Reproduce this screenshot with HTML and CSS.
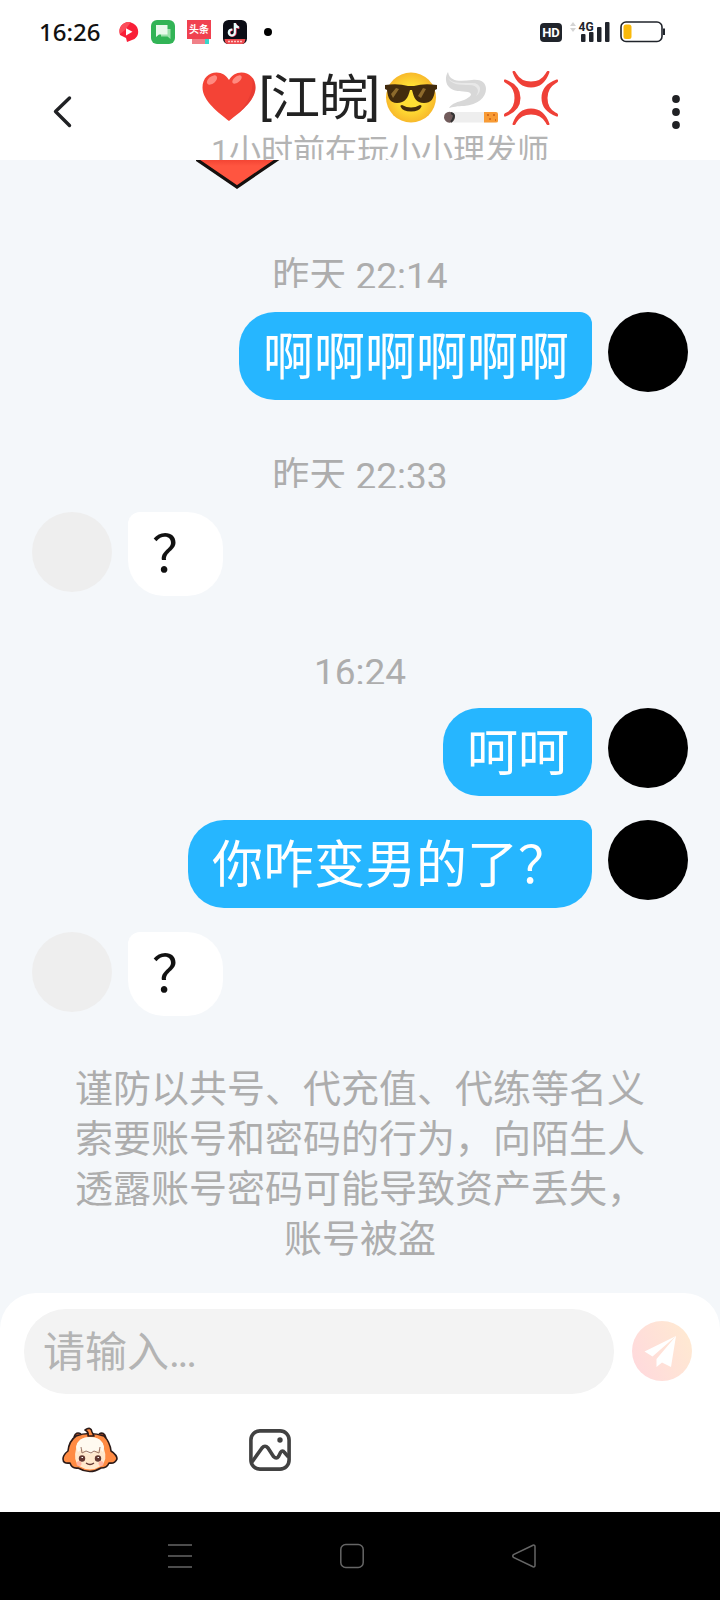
FILE: index.html
```html
<!DOCTYPE html>
<html lang="zh-CN">
<head>
<meta charset="utf-8">
<title>聊天</title>
<link rel="stylesheet" href="styles.css">
</head>
<body>
<div class="phone">
  <div class="status">
    <span class="clock">16:26</span>
    <div class="apps">
      <svg width="20" height="20" viewBox="0 0 20 20"><path d="M4 2C8-1 15 0 18 5c3 6 0 12-5 13l-5 2-1-4-6-3Q-1 6 4 2z" fill="#f91f38"/><path d="M4 2Q8-1 12 0L6 8l-5 4Q-1 6 4 2z" fill="#fb4d5a"/><path d="M7 6.200v7.200l6.500-3.600z" fill="#fff"/></svg>
      <svg width="24" height="24" viewBox="0 0 24 24"><rect width="24" height="24" rx="6" fill="#32b456"/><path d="M10 9h9.500v10l-3-2.500H10z" fill="#9be0ab"/><path d="M5 5h11.500v9.500H8L5 17z" fill="#e9f9ec"/></svg>
      <div class="news"><span class="news-name">头条</span><span class="news-strip"></span></div>
      <svg width="24" height="24" viewBox="0 0 24 24"><rect width="24" height="24" rx="5.500" fill="#0c0d16"/><path d="M1.500 19h21l-1 3.500q-1 1.500-3 1.500H5q-2 0-3-2z" fill="#ee4b50"/><path d="M5 21.500h14" stroke="#ffc9c5" stroke-width="1.500" stroke-dasharray="2 1"/><path d="M12.500 3.500v9.300a3 3 0 1 1-2.700-3M12.500 4c.5 2.400 2 3.600 4 3.800" fill="none" stroke="#ff4c6b" stroke-width="2.300"/><path d="M11.800 3v9.500a3 3 0 1 1-2.700-3M11.800 3.500c.5 2.400 2 3.600 4 3.800" fill="none" stroke="#e6ffff" stroke-width="2.200"/></svg>
      <i class="dot"></i>
    </div>
    <div class="signals">
      <span class="hd">HD</span>
      <svg width="40" height="24" viewBox="0 0 40 24"><path d="M0 6l3-4 3 4zM0 8l3 4 3-4z" fill="#d4d4d4"/><text class="network" x="8.500" y="10.500">4G</text><g fill="#20242b"><rect x="11" y="14" width="4.500" height="8" rx="1"/><rect x="19" y="12" width="4.500" height="10" rx="1"/><rect x="27" y="7" width="4.500" height="15" rx="1"/><rect x="35" y="2" width="4.500" height="20" rx="1"/></g></svg>
      <svg width="46" height="22" viewBox="0 0 46 22"><rect x="1" y="1" width="41" height="19.500" rx="5" fill="#fff" stroke="#20242b" stroke-width="1.600"/><rect x="3.500" y="3.500" width="8" height="14.500" rx="2.500" fill="#f9b90b"/><path d="M44 7.500v6.500" stroke="#20242b" stroke-width="2"/></svg>
    </div>
  </div>

  <header class="header">
    <svg class="back" width="24" height="36" viewBox="0 0 24 36"><path d="M20.500 4L6.500 17.500 20.500 31.500" fill="none" stroke="#202124" stroke-width="3.400" stroke-linecap="round" stroke-linejoin="round"/></svg>
    <div class="heading">
      <h1 class="title">
        <svg width="54" height="54" viewBox="0 0 54 54"><path d="M27 50C17 42 .5 30 .5 16.500.5 7 7 1.500 14.500 1.500 20 1.500 24.500 4.500 27 9c2.500-4.500 7-7.500 12.500-7.500C47 1.500 53.500 7 53.500 16.500 53.500 30 37 42 27 50z" fill="#f44336"/><path d="M27 50C37 42 53.500 30 53.500 16.500q0-6-3-10Q53 30 27 50z" fill="#d63230" opacity=".4"/><ellipse cx="10" cy="9" rx="6" ry="3.500" transform="rotate(-40 10 9)" fill="#ff8a80"/><ellipse cx="35" cy="8.500" rx="5.500" ry="3" transform="rotate(-38 35 8.500)" fill="#ff8a80"/></svg>
        <span class="name">[江皖]</span>
        <svg width="54" height="54" viewBox="0 0 54 54"><defs><radialGradient id="face"><stop offset=".5" stop-color="#ffdf34"/><stop offset="1" stop-color="#f8b92b"/></radialGradient></defs><circle cx="27" cy="26.500" r="25" fill="url(#face)"/><path d="M1 14q13-2 23 1h6q10-3 23-1v4l-2 1c-1 9-4 13-11 13-8 0-10-5-12-13h-2c-2 8-5 13-13 13-7 0-9-5-10-13l-2-1z" fill="#422b0d"/><path d="M7 23l5-6 3 1-6 9zM34 25l5-8 3 1-5 9z" fill="#8d6a2c"/><path d="M18 34q9 5 18 0 2 0 1.500 1.500-2 5-10.500 5t-10.500-5Q16 34 18 34z" fill="#422b0d"/></svg>
        <svg width="54" height="54" viewBox="0 0 54 54"><path d="M4 1C1 5 1 13 6 17c5 4 12 3 18 4 6 2 2 5-4 8-6 2-12 3-15 8 3-1 9-2 15-2 14-1 22-9 22-17 0-7-6-10-14-9C18 10 6 12 4 1z" fill="#d8d8d8"/><path d="M3 5c3 9 13 9 22 9 9 0 11 6 7 11 7-5 5-14-5-13C17 12 6 13 3 5z" fill="#e8e8e8"/><rect x="1" y="41" width="52" height="10.500" rx="4" fill="#eee"/><path d="M40 41h12q2 0 2 2v7q0 1.500-2 1.500H40z" fill="#f89b35"/><path d="M43 44h2m4 0h2m-6 4h2m4 1h1" stroke="#d66c1c" stroke-width="2"/><circle cx="5.500" cy="46.200" r="5.500" fill="#715b5b"/><path d="M7 42q3 1 3 3-1 4-3 6" stroke="#333" stroke-width="2" fill="none"/></svg>
        <svg width="54" height="54" viewBox="0 0 54 54"><g fill="#ef4037"><path id="vein" d="M8.600 1.500q-.2-2.500 2-1.500 1 .5 1.800 2.500Q17 10.500 27 10.500T41.600 2.500Q42.400.5 43.400 0q2.200-1 2 1.500Q40 16.500 27 16.500T8.600 1.500z"/><use href="#vein" transform="rotate(90 27 27)"/><use href="#vein" transform="rotate(180 27 27)"/><use href="#vein" transform="rotate(270 27 27)"/></g></svg>
      </h1>
      <p class="activity">1小时前在玩小小理发师</p>
    </div>
    <svg class="more" width="10" height="36" viewBox="0 0 10 36"><g fill="#202124"><circle cx="5" cy="5" r="3.900"/><circle cx="5" cy="18" r="3.900"/><circle cx="5" cy="31" r="3.900"/></g></svg>
  </header>

  <main class="chat">
    <svg class="sticker" width="84" height="32" viewBox="0 0 84 32"><defs><linearGradient id="st" x2="0" y2="1"><stop stop-color="#ee3d2d"/><stop offset=".3" stop-color="#ff5540"/></linearGradient></defs><path d="M-3-3L41 27 85-3z" fill="url(#st)" stroke="#15100e" stroke-width="3.200"/></svg>
    <time class="time">昨天 22:14</time>
    <div class="row sent"><p class="bubble">啊啊啊啊啊啊</p><i class="avatar"></i></div>
    <time class="time">昨天 22:33</time>
    <div class="row received"><i class="avatar"></i><p class="bubble">？</p></div>
    <time class="time">16:24</time>
    <div class="row sent"><p class="bubble">呵呵</p><i class="avatar"></i></div>
    <div class="row sent"><p class="bubble">你咋变男的了？</p><i class="avatar"></i></div>
    <div class="row received"><i class="avatar"></i><p class="bubble">？</p></div>
    <p class="notice">谨防以共号、代充值、代练等名义<br>索要账号和密码的行为，向陌生人<br>透露账号密码可能导致资产丢失，<br>账号被盗</p>
  </main>

  <section class="composer">
    <div class="compose-row">
      <div class="input">请输入<span class="ellipsis">...</span></div>
      <svg class="send" width="60" height="60" viewBox="0 0 60 60"><defs><linearGradient id="send" x1="0" y1=".8" x2="1" y2=".3"><stop stop-color="#ffd9dd"/><stop offset="1" stop-color="#ffe9d2"/></linearGradient></defs><circle cx="30" cy="30" r="30" fill="url(#send)"/><path d="M44 15L12.500 30.500l8 5L44 15 24.500 38v8l5.500-4.500 9 4.500z" fill="#fff"/></svg>
    </div>
    <div class="tools">
      <svg width="56" height="46" viewBox="0 0 56 46"><g stroke="#2b1a18" stroke-width="1.600" stroke-linejoin="round"><path d="M12 10q2-6 7-3M37 7q5-3 7 4" fill="#bb5631"/><path d="M14 9q13-5 28 0 6 6 7 15 6 4 6 8-2 5-8 4-2 5-8 5-11 7-23 0-6 1-8-5-7 1-7-4 0-4 5-8Q7 14 14 9z" fill="#ff8b43"/><path d="M26 9q1-4-3-6 6-4 7 2l2 4z" fill="#ff8b43"/></g><path d="M14 22Q15 10 28 10t14 12q4 11-3 17-11 7-22 0-6-6-3-17z" fill="#ffe8cd"/><path d="M14 20Q16 10 28 10t14 10l-1 5-3-3-5 3-5 2-5-2-3-3-4 3z" fill="#fffaf0"/><path d="M19 20l1 6 4-2 5 2 3-2 5 2 1-6" fill="none" stroke="#9c7464" stroke-width="1"/><circle cx="20" cy="31.500" r="3.200" fill="#633731"/><circle cx="36" cy="31.500" r="3.200" fill="#633731"/><path d="M19.500 30.500h1.500M35.500 30.500h1.500" stroke="#fff"/><circle cx="17" cy="36.500" r="2.500" fill="#ffb4a1"/><circle cx="39" cy="36.500" r="2.500" fill="#ffb4a1"/><path d="M24 36q4 3 8 0" fill="none" stroke="#633731" stroke-width="1.300"/></svg>
      <svg width="42" height="42" viewBox="0 0 42 42"><g fill="none" stroke="#424242" stroke-width="3.600" stroke-linejoin="round"><rect x="1.900" y="1.900" width="38.200" height="38.200" rx="9"/><path d="M3 33L13 19q3-3.500 6 0L24.500 27.500q3 3 5 0l2-4q2-3 4 0l4 4.500"/></g><circle cx="31" cy="11" r="2.700" fill="#424242"/></svg>
    </div>
  </section>

  <nav class="nav">
    <svg width="24" height="26" viewBox="0 0 24 26"><path d="M0 2h24M0 13h24M0 24h24" stroke="#666" stroke-width="1.700"/></svg>
    <svg width="24" height="26" viewBox="0 0 24 26"><rect x=".8" y="1.600" width="22.400" height="22.800" rx="5" fill="none" stroke="#666" stroke-width="1.500"/></svg>
    <svg width="24" height="26" viewBox="0 0 24 26"><path d="M21 2.200L1.500 11.500q-1.500 1.500 0 3L21 23.800q2 .5 2-1.500V3.700q0-2-2-1.500z" fill="none" stroke="#666" stroke-width="1.500"/></svg>
  </nav>
</div>
</body>
</html>
```

FILE: styles.css
```css
* { box-sizing: border-box; }
body {
  margin: 0;
  font-family: Roboto, "Noto Sans CJK SC", sans-serif;
  font-weight: 400;
}
h1, p { margin: 0; font-weight: inherit; }
svg { display: block; flex: none; }

.phone {
  width: 720px;
  height: 1600px;
  display: flex;
  flex-direction: column;
  overflow: hidden;
  background: #f4f7fa;
}

.status {
  height: 64px;
  padding: 0 54px 0 39px;
  display: flex;
  align-items: center;
  background: #fff;
}
.clock {
  width: 80px;
  font: 500 24px/66px "Noto Sans", sans-serif;
  color: #111;
}
.apps { display: flex; align-items: center; gap: 12px; }
.news {
  width: 24px;
  height: 24px;
  background: #f04150;
  display: flex;
  flex-direction: column;
  justify-content: space-between;
}
.news-name { font: 700 10px/15px "Noto Sans CJK SC", sans-serif; color: #fff; text-align: center; white-space: nowrap; padding-top: 1px; }
.news-strip { height: 5px; background: linear-gradient(90deg, #fff 5px, #f08088 5px 18px, #38d6ca 18px 22px, #fff 22px); }
.dot { width: 8px; height: 8px; margin-left: 5px; border-radius: 50%; background: #000; }
.signals { margin-left: auto; display: flex; align-items: center; gap: 10px; }
.hd {
  width: 22px;
  height: 19px;
  margin-top: 1px;
  border-radius: 4px;
  background: #20242b;
  color: #fff;
  font: 700 13px/19px Roboto, sans-serif;
  text-align: center;
}
.hd + svg { margin-left: -2px; }
.network { font: 700 12px Roboto, sans-serif; fill: #20242b; }

.header {
  height: 96px;
  padding: 0 39px 0 49px;
  display: flex;
  justify-content: space-between;
  overflow: hidden;
  background: #fff;
}
.back, .more { margin-top: 30px; }
.heading { display: flex; flex-direction: column; align-items: center; padding: 2px 0 0 16px; }
.title {
  height: 64px;
  display: flex;
  align-items: center;
  gap: 6px;
  color: #222;
}
.name {
  width: 118px;
  margin: 2px 1px 0 -3px;
  font-size: 49px;
  line-height: 64px;
  letter-spacing: -1px;
  white-space: nowrap;
}
.activity { font-size: 32px; line-height: 42px; color: #b4b4b4; }

.chat {
  height: 1133px;
  display: flex;
  flex-direction: column;
}
.sticker { margin-left: 196px; }
.time {
  height: 40px;
  margin: 48px 0 24px;
  overflow: hidden;
  text-align: center;
  font-size: 37px;
  line-height: 57px;
  color: #adadad;
}
.sticker + .time { margin-top: 56px; }
.row { display: flex; gap: 16px; padding: 0 32px; }
.row + .row { margin-top: 24px; }
.sent { justify-content: flex-end; }
.avatar { width: 80px; height: 80px; border-radius: 50%; background: #eee; }
.sent .avatar { background: #000; }
.bubble {
  height: 84px;
  padding: 1px 20px 0 24px;
  border-radius: 12px 36px 36px 36px;
  background: #fff;
  color: #111;
  font-size: 51px;
  line-height: 84px;
}
.sent .bubble {
  height: 88px;
  padding: 2px 23px 0 24px;
  border-radius: 36px 12px 36px 36px;
  background: #26b6ff;
  color: #fff;
  line-height: 88px;
}
.notice {
  margin-top: 48px;
  text-align: center;
  font-size: 38px;
  line-height: 50px;
  color: #adadad;
}

.composer {
  height: 219px;
  padding: 16px 28px 0 24px;
  border-radius: 36px 36px 0 0;
  background: #fff;
}
.compose-row { display: flex; align-items: center; justify-content: space-between; }
.send { margin-bottom: 1px; }
.input {
  width: 590px;
  height: 85px;
  padding: 1px 0 0 19px;
  border-radius: 42px;
  background: #f3f3f3;
  font-size: 42px;
  line-height: 85px;
  color: #b4b4b4;
}
.ellipsis { letter-spacing: -2.5px; }
.tools { display: flex; align-items: center; gap: 131px; padding: 33px 0 0 38px; }

.nav {
  height: 88px;
  padding: 0 184px 0 168px;
  display: flex;
  align-items: center;
  justify-content: space-between;
  background: #000;
}
```
